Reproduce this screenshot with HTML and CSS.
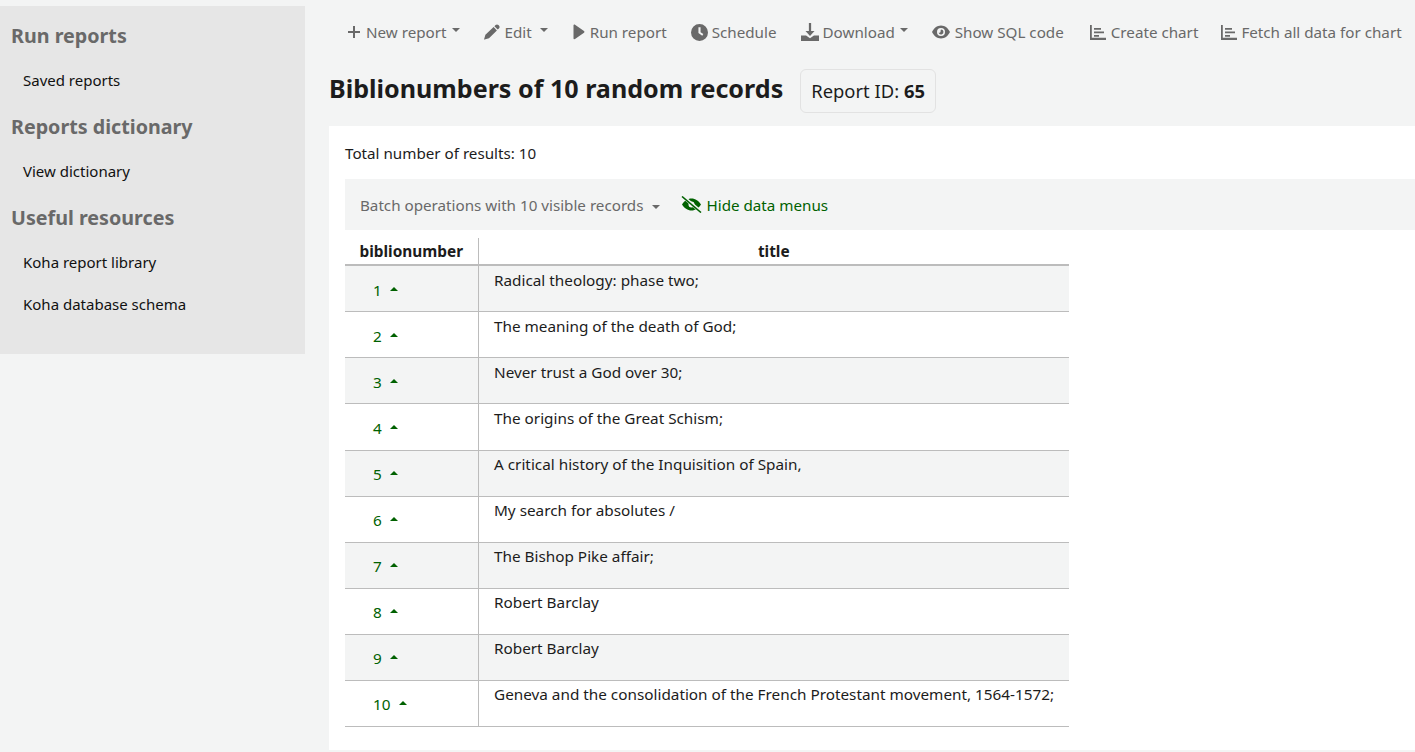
FILE: index.html
```html
<!DOCTYPE html>
<html lang="en">
<head>
  <meta charset="UTF-8" />
  <title>Biblionumbers of 10 random records</title>
  <meta name="viewport" content="width=device-width, initial-scale=1" />
  <link rel="stylesheet" href="styles.css">
</head>
<body>
  <aside class="sidebar">
    <h5>Run reports</h5>
    <ul><li>Saved reports</li></ul>
    <h5>Reports dictionary</h5>
    <ul><li>View dictionary</li></ul>
    <h5>Useful resources</h5>
    <ul>
      <li>Koha report library</li>
      <li>Koha database schema</li>
    </ul>
  </aside>

  <main class="main">
    <div class="toolbar">
      <span class="tool">
        <svg class="icon" viewBox="0 0 14 14"><path d="M6 1h2v5h5v2H8v5H6V8H1V6h5z"/></svg>
        New report<i class="caret caret-tight"></i>
      </span>
      <span class="tool">
        <svg class="icon icon-edit" viewBox="0 0 16 16"><path d="M11.600 1.100a2 2 0 0 1 2.800 0l.5.5a2 2 0 0 1 0 2.800l-1.200 1.200-3.300-3.300zM9.600 3.100l3.300 3.300-7.900 7.900-4.500 1.300a.3.3 0 0 1-.4-.4l1.300-4.500z"/></svg>
        Edit<i class="caret"></i>
      </span>
      <span class="tool">
        <svg class="icon icon-play" viewBox="0 0 12 16"><path d="M1 1.500c0-.8.8-1.200 1.500-.8l9 6.300c.6.400.6 1.300 0 1.700l-9 6.300c-.7.400-1.500 0-1.500-.8z"/></svg>
        Run report
      </span>
      <span class="tool">
        <svg class="icon icon-clock" viewBox="0 0 16 16"><path fill-rule="evenodd" d="M8 0a8 8 0 1 1 0 16A8 8 0 0 1 8 0zM7 3v5.500l3.600 2.500 1-1.500L9 7.700V3z"/></svg>
        Schedule
      </span>
      <span class="tool">
        <svg class="icon icon-down" viewBox="0 0 16 16"><path d="M7 0h2v7h3l-4 4.500L4 7h3z"/><path d="M0 11h4.500L8 13.500l3.500-2.500H16v5H0z"/></svg>
        Download<i class="caret caret-tight"></i>
      </span>
      <span class="tool">
        <svg class="icon icon-eye" viewBox="0 0 18 14"><path fill-rule="evenodd" d="M9 .5c4 0 7.200 2.800 9 6.500-1.800 3.700-5 6.500-9 6.500S1.800 10.700 0 7C1.800 3.300 5 .5 9 .5zM9 3a4 4 0 1 0 0 8 4 4 0 0 0 0-8zm0 1.500a2.500 2.500 0 1 1-2.400 3.200c.8.300 2-.2 2-1.300 0-.7-.1-1.300.4-1.900z"/></svg>
        Show SQL code
      </span>
      <span class="tool tool-create">
        <svg class="icon icon-chart" viewBox="0 0 16 15"><path d="M0 0h1.800v12.700H16V15H0zM4 3h7v1.800H4zM4 6.500h10v1.800H4zM4 10h5v1.800H4z"/></svg>
        Create chart
      </span>
      <span class="tool tool-fetch">
        <svg class="icon icon-chart" viewBox="0 0 16 15"><path d="M0 0h1.800v12.700H16V15H0zM4 3h7v1.800H4zM4 6.500h10v1.800H4zM4 10h5v1.800H4z"/></svg>
        Fetch all data for chart
      </span>
    </div>

    <div class="heading">
      <h1>Biblionumbers of 10 random records</h1>
      <span class="report-id">Report ID: <b>65</b></span>
    </div>

    <div class="panel">
      <p class="total">Total number of results: 10</p>
      <div class="batch">
        <span class="batch-label">Batch operations with 10 visible records<i class="caret"></i></span>
        <span class="hide-menus">
          <svg class="icon-slash" viewBox="0 0 21 17"><path fill-rule="evenodd" d="M10.500 2.500c3.800 0 7.300 2.500 9.500 6-2.200 3.500-5.700 6-9.500 6s-7.300-2.500-9.500-6c2.200-3.500 5.700-6 9.500-6zm0 3a3 3 0 1 0 0 6 3 3 0 0 0 0-6z"/><path class="slash-cut" d="M3 1.500l16 13.500"/><path class="slash-line" d="M1 .5l19 16"/></svg>
          Hide data menus
        </span>
      </div>

      <table class="results">
        <thead>
          <tr><th class="col-num">biblionumber</th><th>title</th></tr>
        </thead>
        <tbody>
          <tr><td class="num"><span>1</span><i class="up"></i></td><td>Radical theology: phase two;</td></tr>
          <tr><td class="num"><span>2</span><i class="up"></i></td><td>The meaning of the death of God;</td></tr>
          <tr><td class="num"><span>3</span><i class="up"></i></td><td>Never trust a God over 30;</td></tr>
          <tr class="row-tall"><td class="num"><span>4</span><i class="up"></i></td><td>The origins of the Great Schism;</td></tr>
          <tr><td class="num"><span>5</span><i class="up"></i></td><td>A critical history of the Inquisition of Spain,</td></tr>
          <tr><td class="num"><span>6</span><i class="up"></i></td><td>My search for absolutes /</td></tr>
          <tr><td class="num"><span>7</span><i class="up"></i></td><td>The Bishop Pike affair;</td></tr>
          <tr><td class="num"><span>8</span><i class="up"></i></td><td>Robert Barclay</td></tr>
          <tr><td class="num"><span>9</span><i class="up"></i></td><td>Robert Barclay</td></tr>
          <tr><td class="num"><span>10</span><i class="up"></i></td><td>Geneva and the consolidation of the French Protestant movement, 1564-1572;</td></tr>
        </tbody>
      </table>
    </div>
  </main>
</body>
</html>
```

FILE: styles.css
```css
body {
  margin: 0;
  height: 752px;
  overflow: hidden;
  display: flex;
  align-items: flex-start;
  background: #f3f4f4;
  color: #1c1c1c;
  font-family: "Noto Sans", "Open Sans", sans-serif;
  font-size: 15.2px;
}

.sidebar {
  width: 305px;
  height: 348px;
  margin-top: 6px;
  padding: 16px 0 0 11px;
  box-sizing: border-box;
  flex-shrink: 0;
  background: #e6e6e6;
}
.sidebar h5 {
  margin: 0;
  height: 27px;
  line-height: 27px;
  font-size: 19.7px;
  font-weight: 700;
  color: #696969;
}
.sidebar ul {
  list-style: none;
  margin: 0;
  padding: 21px 0 23px 12px;
  font-size: 15px;
}
.sidebar li {
  height: 20px;
  line-height: 20px;
  color: #111;
  margin-bottom: 22px;
}
.sidebar li:last-child {
  margin-bottom: 0;
}

.main {
  margin-left: 24px;
  flex: 1;
  min-width: 0;
}

.toolbar {
  display: flex;
  gap: 24px;
  padding: 22px 0 0 18px;
  height: 22px;
  white-space: nowrap;
  color: #696969;
}
.tool {
  display: flex;
  align-items: center;
  height: 20px;
  line-height: 20px;
}
.tool-create {
  margin-left: 2px;
}
.tool-fetch {
  margin-left: -1px;
}
.tool-fetch .icon {
  margin-right: 4px;
}
.icon {
  width: 14px;
  height: 14px;
  margin-right: 5px;
  fill: #696969;
}
.icon-edit {
  width: 16px;
  height: 16px;
}
.icon-play {
  width: 13px;
  height: 16px;
}
.icon-clock {
  width: 17px;
  height: 17px;
  margin-right: 4px;
}
.icon-down {
  width: 18px;
  height: 18px;
  margin-right: 4px;
}
.icon-eye {
  width: 18px;
  height: 14px;
}
.icon-chart {
  width: 16px;
  height: 15px;
}
.caret {
  display: inline-block;
  margin-left: 8px;
  border-top: 4px solid #696969;
  border-left: 4px solid transparent;
  border-right: 4px solid transparent;
  transform: translateY(-2px);
}
.caret-tight {
  margin-left: 5px;
}

.heading {
  display: flex;
  align-items: center;
  margin-top: 25px;
  height: 44px;
}
h1 {
  margin: 0 17px 6px 0;
  font-size: 25.1px;
  font-weight: 700;
  color: #1c1c1c;
}
.report-id {
  display: flex;
  gap: 5px;
  align-items: center;
  height: 40px;
  padding: 0 10px 2px;
  border: 1px solid #e2e2e2;
  border-radius: 6px;
  font-size: 18.4px;
}

.panel {
  margin-top: 13px;
  height: 624px;
  padding: 0 0 0 16px;
  box-sizing: border-box;
  background: #fff;
}
.total {
  margin: 0;
  padding-top: 17px;
  line-height: 20px;
}
.batch {
  display: flex;
  align-items: center;
  gap: 21px;
  margin-top: 16px;
  height: 51px;
  padding-left: 15px;
  background: #f3f4f4;
}
.batch-label {
  color: #696969;
}
.batch-label .caret {
  margin-left: 9px;
}
.hide-menus {
  display: flex;
  align-items: center;
  gap: 4px;
  color: #006100;
}
.icon-slash {
  width: 21px;
  height: 17px;
  fill: #006100;
}
.slash-cut {
  fill: none;
  stroke: #f3f4f4;
  stroke-width: 3.5;
}
.slash-line {
  fill: none;
  stroke: #006100;
  stroke-width: 1.6;
}

.results {
  margin-top: 8px;
  width: 724px;
  border-collapse: collapse;
  table-layout: fixed;
}
.results th {
  height: 27px;
  padding: 2px 0 0;
  box-sizing: border-box;
  font-weight: 700;
  font-size: 15.4px;
  line-height: 20px;
  border-bottom: 2px solid #bcbcbc;
}
.col-num {
  width: 133px;
  border-right: 1px solid #bcbcbc;
}
.results td {
  height: 46px;
  padding: 4px 8px 0 15.5px;
  box-sizing: border-box;
  vertical-align: top;
  font-size: 15.3px;
  line-height: 20px;
  border-bottom: 1px solid #bcbcbc;
}
.results .row-tall td {
  height: 47px;
}
.results td.num {
  padding: 14px 0 0 28px;
  border-right: 1px solid #bcbcbc;
  color: #006100;
}
.results .row-tall ~ tr td {
  padding-top: 3px;
}
.results .row-tall ~ tr td.num {
  padding-top: 13px;
}
.results tbody tr:nth-child(odd) {
  background: #f3f4f4;
}
.up {
  display: inline-block;
  margin-left: 8px;
  border-bottom: 4px solid #006100;
  border-left: 4px solid transparent;
  border-right: 4px solid transparent;
  transform: translateY(-5px);
}
```
